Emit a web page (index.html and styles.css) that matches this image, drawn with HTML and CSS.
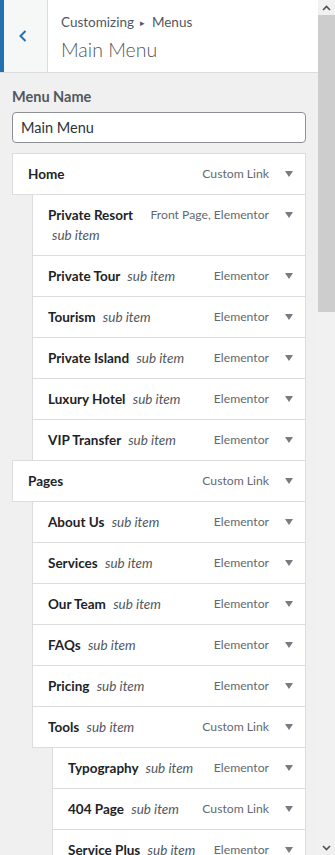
FILE: index.html
```html
<!DOCTYPE html>
<html>
    <head>
        <meta charset="UTF-8">
        <title>Customizing Menus</title>
        <link rel="stylesheet" href="styles.css">
    </head>
    <body>
        <div class="panel">
            <div class="panel-header">
                <button class="back-button" aria-label="Back">
                    <svg width="10" height="14" viewBox="0 0 10 14"><polyline points="7.5,2 2.5,7 7.5,12" fill="none" stroke="#2271b1" stroke-width="2"/></svg>
                </button>
                <div class="panel-title">
                    <span class="breadcrumb">Customizing <span class="sep">&#9656;</span> Menus</span>
                    <h3>Main Menu</h3>
                </div>
            </div>

            <div class="panel-body">
                <label class="field-label" for="menuName">Menu Name</label>
                <input id="menuName" class="menu-name" type="text" value="Main Menu">

                <ul class="menu-items">
                    <li class="menu-item depth-0"><span class="item-title"><span class="item-name">Home</span></span><span class="item-controls"><span class="item-type">Custom Link</span><span class="toggle"></span></span></li>
                    <li class="menu-item depth-1"><span class="item-title"><span class="item-name">Private Resort</span> <span class="is-submenu">sub item</span></span><span class="item-controls"><span class="item-type">Front Page, Elementor</span><span class="toggle"></span></span></li>
                    <li class="menu-item depth-1"><span class="item-title"><span class="item-name">Private Tour</span> <span class="is-submenu">sub item</span></span><span class="item-controls"><span class="item-type">Elementor</span><span class="toggle"></span></span></li>
                    <li class="menu-item depth-1"><span class="item-title"><span class="item-name">Tourism</span> <span class="is-submenu">sub item</span></span><span class="item-controls"><span class="item-type">Elementor</span><span class="toggle"></span></span></li>
                    <li class="menu-item depth-1"><span class="item-title"><span class="item-name">Private Island</span> <span class="is-submenu">sub item</span></span><span class="item-controls"><span class="item-type">Elementor</span><span class="toggle"></span></span></li>
                    <li class="menu-item depth-1"><span class="item-title"><span class="item-name">Luxury Hotel</span> <span class="is-submenu">sub item</span></span><span class="item-controls"><span class="item-type">Elementor</span><span class="toggle"></span></span></li>
                    <li class="menu-item depth-1"><span class="item-title"><span class="item-name">VIP Transfer</span> <span class="is-submenu">sub item</span></span><span class="item-controls"><span class="item-type">Elementor</span><span class="toggle"></span></span></li>
                    <li class="menu-item depth-0"><span class="item-title"><span class="item-name">Pages</span></span><span class="item-controls"><span class="item-type">Custom Link</span><span class="toggle"></span></span></li>
                    <li class="menu-item depth-1"><span class="item-title"><span class="item-name">About Us</span> <span class="is-submenu">sub item</span></span><span class="item-controls"><span class="item-type">Elementor</span><span class="toggle"></span></span></li>
                    <li class="menu-item depth-1"><span class="item-title"><span class="item-name">Services</span> <span class="is-submenu">sub item</span></span><span class="item-controls"><span class="item-type">Elementor</span><span class="toggle"></span></span></li>
                    <li class="menu-item depth-1"><span class="item-title"><span class="item-name">Our Team</span> <span class="is-submenu">sub item</span></span><span class="item-controls"><span class="item-type">Elementor</span><span class="toggle"></span></span></li>
                    <li class="menu-item depth-1"><span class="item-title"><span class="item-name">FAQs</span> <span class="is-submenu">sub item</span></span><span class="item-controls"><span class="item-type">Elementor</span><span class="toggle"></span></span></li>
                    <li class="menu-item depth-1"><span class="item-title"><span class="item-name">Pricing</span> <span class="is-submenu">sub item</span></span><span class="item-controls"><span class="item-type">Elementor</span><span class="toggle"></span></span></li>
                    <li class="menu-item depth-1"><span class="item-title"><span class="item-name">Tools</span> <span class="is-submenu">sub item</span></span><span class="item-controls"><span class="item-type">Custom Link</span><span class="toggle"></span></span></li>
                    <li class="menu-item depth-2"><span class="item-title"><span class="item-name">Typography</span> <span class="is-submenu">sub item</span></span><span class="item-controls"><span class="item-type">Elementor</span><span class="toggle"></span></span></li>
                    <li class="menu-item depth-2"><span class="item-title"><span class="item-name">404 Page</span> <span class="is-submenu">sub item</span></span><span class="item-controls"><span class="item-type">Custom Link</span><span class="toggle"></span></span></li>
                    <li class="menu-item depth-2"><span class="item-title"><span class="item-name">Service Plus</span> <span class="is-submenu">sub item</span></span><span class="item-controls"><span class="item-type">Elementor</span><span class="toggle"></span></span></li>
                </ul>
            </div>
        </div>

        <div class="scrollbar">
            <div class="scroll-arrow">
                <svg width="9" height="6" viewBox="0 0 9 6"><polyline points="1,5 4.5,1.5 8,5" fill="none" stroke="#505050" stroke-width="1.6"/></svg>
            </div>
            <div class="scroll-track">
                <div class="scroll-thumb"></div>
            </div>
            <div class="scroll-arrow">
                <svg width="9" height="6" viewBox="0 0 9 6"><polyline points="1,1 4.5,4.5 8,1" fill="none" stroke="#505050" stroke-width="1.6"/></svg>
            </div>
        </div>
    </body>
</html>
```

FILE: styles.css
```css
html {
    width: 100%;
    height: 100%;
}

body {
    margin: 0;
    height: 855px;
    overflow: hidden;
    display: flex;
    background: #f0f0f1;
    font-family: Lato, "Noto Sans", sans-serif;
    font-size: 13px;
    color: #1d2327;
}

.panel {
    flex: 1;
    min-width: 0;
    height: 855px;
    overflow: hidden;
}

.panel-header {
    display: flex;
    height: 72px;
    background: #fff;
    border-bottom: 1px solid #dcdcde;
}

.back-button {
    width: 48px;
    height: 72px;
    margin: 0;
    border: none;
    border-left: 4px solid #2271b1;
    border-right: 1px solid #dcdcde;
    background: #f6f7f7;
    display: flex;
    align-items: center;
    justify-content: center;
    box-sizing: border-box;
    padding: 0 6px 0 0;
}

.panel-title {
    padding: 12px 0 0 13px;
}

.breadcrumb {
    display: block;
    color: #50575e;
    font-size: 13.5px;
    line-height: 20px;
}

.sep {
    font-size: 9px;
    padding: 0 3px;
    vertical-align: 1px;
}

.panel-title h3 {
    margin: 4px 0 0;
    font-size: 19.5px;
    font-weight: 300;
    line-height: 26px;
    color: #50575e;
}

.panel-body {
    padding: 14px 12px 0;
}

.field-label {
    display: block;
    font-size: 14.5px;
    font-weight: 700;
    color: #50575e;
    line-height: 20px;
    margin-bottom: 5px;
}

.menu-name {
    display: block;
    width: 100%;
    box-sizing: border-box;
    height: 31px;
    padding: 0 8px;
    border: 1px solid #8c8f94;
    border-radius: 4px;
    font-family: inherit;
    font-size: 14.5px;
    color: #2c3338;
    background: #fff;
}

.menu-items {
    list-style-type: none;
    margin: 11px 0 0;
    padding: 0;
}

.menu-item {
    display: flex;
    align-items: flex-start;
    margin-top: -1px;
    padding: 10px 12px 10px 15px;
    background: #fff;
    border: 1px solid #dcdcde;
    line-height: 20px;
    font-size: 13.5px;
}

.depth-1 {
    margin-left: 20px;
}

.depth-2 {
    margin-left: 40px;
}

.item-title {
    flex: 1;
    min-width: 0;
    font-weight: 700;
    color: #1d2327;
}

.item-name {
    white-space: nowrap;
}

.is-submenu {
    margin-left: 4px;
    font-weight: 400;
    font-style: italic;
    color: #50575e;
}

.item-controls {
    display: flex;
    align-items: center;
    height: 20px;
    flex: none;
    margin-left: 10px;
}

.item-type {
    font-size: 12.2px;
    color: #646970;
}

.toggle {
    width: 0;
    height: 0;
    margin-left: 16px;
    border-left: 4px solid transparent;
    border-right: 4px solid transparent;
    border-top: 6px solid #787c82;
}

.scrollbar {
    width: 17px;
    flex: none;
    height: 855px;
    display: flex;
    flex-direction: column;
    background: #f1f1f1;
}

.scroll-arrow {
    height: 15px;
    display: flex;
    align-items: center;
    justify-content: center;
}

.scroll-track {
    flex: 1;
}

.scroll-thumb {
    height: 297px;
    background: #cdcdcd;
}
```
